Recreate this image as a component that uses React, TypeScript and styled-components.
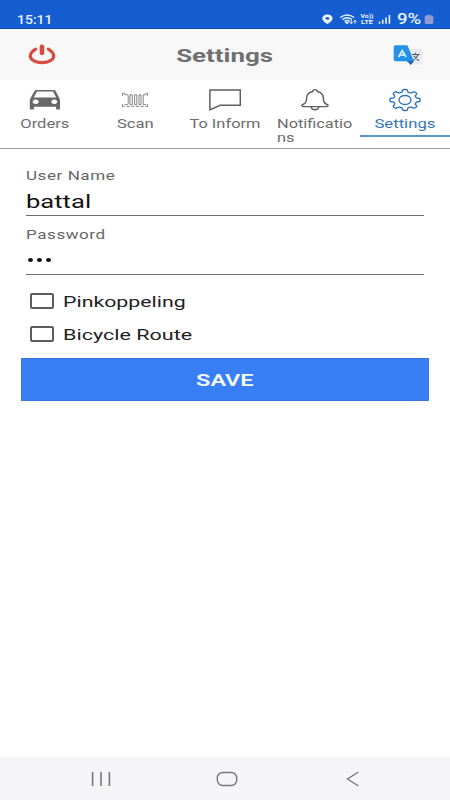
import React from 'react';
import styled, { createGlobalStyle } from 'styled-components';

const GlobalStyle = createGlobalStyle`
  * { box-sizing: border-box; }
  body { margin: 0; background: #fff; font-family: Roboto, "Liberation Sans", sans-serif; }
`;

const Screen = styled.div`
  width: 450px;
  height: 800px;
  display: flex;
  flex-direction: column;
  background: #fff;
  overflow: hidden;
`;

/* Wide lettering: glyphs are stretched horizontally from the given origin. */
const Wide = styled.span<{ $x: number; $origin?: string; $gap?: number }>`
  display: block;
  width: max-content;
  white-space: pre;
  letter-spacing: ${p => p.$gap ?? 0}px;
  transform: scaleX(${p => p.$x});
  transform-origin: ${p => p.$origin ?? 'left'} center;
`;

const StatusBar = styled.header`
  height: 29px;
  flex: none;
  display: flex;
  align-items: flex-start;
  justify-content: space-between;
  padding: 11px 16px 0 17px;
  background: #165dd2;
  border-bottom: 1px solid #1047ac;
  color: #e9f4ff;
  font-size: 12.5px;
  line-height: 17px;
  font-weight: 500;
`;

const StatusIcons = styled.div`
  display: flex;
  width: 112px;
`;

const Percent = styled.div`
  width: 26px;
  height: 17px;
  margin-left: -2px;
  margin-right: 1px;
  font-size: 14px;
`;

const TitleBar = styled.div`
  height: 51px;
  flex: none;
  display: grid;
  grid-template-columns: 84px 1fr 84px;
  align-items: center;
  justify-items: center;
  background: #f8f8f8;
`;

const Title = styled.h1`
  margin: 0;
  padding-top: 2px;
  color: #6f6f6f;
  font-size: 18.5px;
  line-height: 24px;
  font-weight: 700;
`;

const IconButton = styled.button`
  border: 0;
  padding: 0;
  background: none;
  display: block;
  line-height: 0;
`;

const Tabs = styled.nav`
  height: 69px;
  flex: none;
  display: grid;
  grid-template-columns: repeat(5, 90px);
  border-bottom: 1px solid #999;
`;

const Tab = styled.a<{ $active?: boolean }>`
  height: 57px;
  display: flex;
  flex-direction: column;
  align-items: center;
  padding-top: 7px;
  color: ${p => (p.$active ? '#3576bd' : '#6c6c6c')};
  border-bottom: ${p => (p.$active ? '2px solid #5c94cc' : '0')};
  font-size: 12px;
  line-height: 14px;

  svg { display: block; flex: none; }
`;

const TabLabel = styled.div<{ $multi?: boolean }>`
  margin-top: 4px;
  ${p => p.$multi && 'align-self: flex-start; margin-left: 6.5px;'}
`;

const Form = styled.main`
  flex: 1;
  padding: 18px 21px 0;
`;

const Field = styled.label<{ $height: number; $top?: number }>`
  display: block;
  height: ${p => p.$height}px;
  margin: ${p => p.$top ?? 0}px 5px 0;
  border-bottom: 1px solid #6c6c6c;
`;

const FieldLabel = styled.div`
  color: #666;
  font-size: 12.7px;
  line-height: 17px;
`;

const FieldValue = styled.div`
  margin-top: 7px;
  padding-top: 1px;
  color: #111;
  font-size: 18px;
  line-height: 20px;
`;

const Dots = styled.div`
  display: flex;
  gap: 4px;
  padding: 15px 0 0 2px;
`;

const Dot = styled.i`
  width: 5px;
  height: 4px;
  border-radius: 50%;
  background: #111;
`;

const Checks = styled.div`
  margin: 9px 0 0 9px;
`;

const CheckRow = styled.label`
  display: flex;
  align-items: center;
  gap: 9px;
  height: 33.5px;
  color: #222;
  font-size: 15.5px;
  line-height: 22px;
`;

const CheckText = styled.div`
  padding-top: 2px;
`;

const Box = styled.i`
  width: 24px;
  height: 16px;
  border: 2px solid #5d5d5d;
  border-radius: 2px;
`;

const SaveButton = styled.button`
  display: flex;
  align-items: center;
  justify-content: center;
  width: 408px;
  height: 43px;
  margin-top: 7px;
  padding: 0;
  border: 1px solid #3975d8;
  background: #387ef5;
  color: #f4faff;
  font: 600 17px/22px Roboto, sans-serif;
`;

const NavBar = styled.footer`
  height: 43px;
  flex: none;
  display: grid;
  grid-template-columns: 202px 50px 202px;
  align-items: center;
  justify-items: center;
  padding-top: 1px;
  background: #f5f5f7;
`;

const SystemIcons = () => (
  <svg width="77" height="17" viewBox="322 11 77 17" fill="none" stroke="#e9f4ff">
    <path d="M327.4 14.6c-3.3 0-5.1 1.7-5.1 4 0 2.1 2.2 3.7 5.1 5.5 2.9-1.8 5.1-3.4 5.1-5.5 0-2.3-1.8-4-5.1-4z" fill="#f4faff" stroke="none" />
    <ellipse cx="327.4" cy="18.4" rx="1.9" ry="1.3" fill="#165dd2" stroke="none" />
    <path d="M340.2 17.5q7-5 14 0M342.3 19.5q4.9-3.5 9.8 0M344.5 21.4q2.7-1.8 5.2 0" strokeWidth="1.3" />
    <path d="M347 23.7l-1.7-1.2h3.4zM351.3 20.2v3.3m-1.5-1.2l1.5 1.2 1.5-1.2M355 23.7v-3.4m-1.5 1.2l1.5-1.2 1.5 1.2" strokeWidth="1" />
    <g fill="#e9f4ff" stroke="none" fontFamily="Roboto" fontWeight="700">
      <text x="360.5" y="18" fontSize="5" textLength="13" lengthAdjust="spacingAndGlyphs">Vo))</text>
      <text x="361" y="24.2" fontSize="5" textLength="12" lengthAdjust="spacingAndGlyphs">LTE</text>
    </g>
    <path d="M379.5 21.8v1.9M382.7 19.7v4M386 17.4v6.3M389.4 15v8.7" strokeWidth="1.6" />
  </svg>
);

const Battery = () => (
  <svg width="10" height="17" viewBox="0 0 10 17">
    <path d="M2.2 4.6h1.2V3.7h3v.9h1.4c1 0 1.5.5 1.5 1.4v5.6c0 .9-.5 1.4-1.5 1.4H2.2c-1 0-1.5-.5-1.5-1.4V6c0-.9.5-1.4 1.5-1.4z" fill="#8f9bd5" />
  </svg>
);

const PowerIcon = () => (
  <svg width="28" height="22" viewBox="0 0 28 22" fill="none" stroke="#d74c40" strokeLinecap="round">
    <path d="M7.7 5.2C1.3 9 1 13.2 4.6 16C9.5 19.5 18.5 19.5 23.4 16C27 13.2 26.7 9 20.3 5.2" strokeWidth="3.1" />
    <path d="M14 2.8v6.2" strokeWidth="4.6" />
  </svg>
);

const TranslateIcon = () => (
  <svg width="30" height="22" viewBox="393 43 30 22">
    <path d="M407 48h14q1.5 0 1.5 1.3v13q0 1.3-1.5 1.3h-10z" fill="#e7ebef" />
    <path d="M395.7 44.2h10.7q1 0 1.4.9l6 14.8-3.1 3.8-4.1-3.5h-10.9q-2 0-2-1.6V45.8q0-1.6 2-1.6z" fill="#2490e6" />
    <path d="M408.2 60.2h5.7l-3.2 3.7z" fill="#285f9c" />
    <path d="M398.6 56l3.6-6.3 3.8 6.3M400 54h4.5" fill="none" stroke="#e6f5ff" strokeWidth="1.6" />
    <path d="M412 53.5h7.5M415.5 51.8v1.7M418.3 53.5q-1.8 4.2-5 5.7M413.7 54.7q2 3 5.3 4.7" fill="none" stroke="#4b5963" strokeWidth="1.1" />
  </svg>
);

const CarIcon = () => (
  <svg width="34" height="26" viewBox="0 0 34 26">
    <path fillRule="evenodd" fill="#696969" d="M8.5 3h17.2q1.6 0 2.2 1.4l3.6 7.2q.5 1 .5 2v8.1q0 .9-1.1.9h-1.6q-1.2 0-1.2-.9v-1.9H5.9v1.9q0 .9-1.2.9H3q-1.2 0-1.2-.9v-8.1q0-1 .5-2l3.9-7.2Q6.8 3 8.5 3zM9 4.6L5.8 10.4h22.4L25 4.6zM7.7 12.5a3 2.3 0 1 0 .01 0zM26.3 12.5a3 2.3 0 1 0 .01 0z" />
  </svg>
);

const ScanIcon = () => (
  <svg width="30" height="26" viewBox="0 0 30 26" fill="none" stroke="#777" strokeWidth=".9">
    <path d="M4.6 6.3H2.4v2.6M25.4 6.3h2.2v2.6M4.6 19.5H2.4v-2.6M25.4 19.5h2.2v-2.6M4.2 7.6h2.2q1.8 0 1.8 1.4v7.6q0 1.1-1.4 1.1H4.4M10 7.8h2.3v9.9H10zM14.6 7.8h2.2v9.9h-2.2zM19 7.8h2v9.9h-2zM23.2 17.7V7.8h3M23.2 17.7h3" />
    <path d="M6.8 19.4h17" strokeDasharray="3 1.6" />
  </svg>
);

const ChatIcon = () => (
  <svg width="34" height="26" viewBox="0 0 34 26" fill="none" stroke="#5e5e5e" strokeWidth="1.5">
    <path d="M1.9 2.9h30.4v15.3H12.1L1.9 22.9z" />
  </svg>
);

const BellIcon = () => (
  <svg width="30" height="26" viewBox="0 0 30 26" fill="none" stroke="#5e5e5e" strokeWidth="1.45">
    <path d="M12.7 4.5q0-1.9 2.3-1.9t2.3 1.9q5.8 1.4 6 6.1c.1 4.1.6 5.7 3.3 6.7 2.3.8 1.8 2.3-.5 2.3H3.9c-2.3 0-2.8-1.5-.5-2.3 2.7-1 3.2-2.6 3.3-6.7q.2-4.7 6-6.1zM11.2 19.8c.2 3.9 7.4 3.9 7.6 0" />
  </svg>
);

/* Eight-toothed outline: the radius alternates between tooth tip and valley. */
const gearPath = (() => {
  const points: string[] = [];
  for (let i = 0; i <= 128; i++) {
    const a = (i / 128) * Math.PI * 2;
    const radius = 0.89 + Math.tanh(2.6 * Math.cos(8 * a)) * 0.12;
    points.push(`${(17 + Math.cos(a) * 15 * radius).toFixed(2)} ${(13 + Math.sin(a) * 10.4 * radius).toFixed(2)}`);
  }
  return `M${points.join('L')}Z`;
})();

const GearIcon = () => (
  <svg width="34" height="26" viewBox="0 0 34 26" fill="none" stroke="#2c70bd" strokeWidth="1.35">
    <path d={gearPath} strokeLinejoin="round" />
    <ellipse cx="17" cy="13" rx="6" ry="4.5" />
  </svg>
);

export default function App() {
  return (
    <>
      <GlobalStyle />
      <Screen>
        <StatusBar>
          <Wide $x={1.12}>15:11</Wide>
          <StatusIcons>
            <SystemIcons />
            <Percent><Wide $x={1.33}>9%</Wide></Percent>
            <Battery />
          </StatusIcons>
        </StatusBar>
        <TitleBar>
          <IconButton aria-label="Power"><PowerIcon /></IconButton>
          <Title><Wide $x={1.4} $origin="center">Settings</Wide></Title>
          <IconButton aria-label="Language"><TranslateIcon /></IconButton>
        </TitleBar>
        <Tabs>
          <Tab><CarIcon /><TabLabel><Wide $x={1.38} $origin="center">Orders</Wide></TabLabel></Tab>
          <Tab><ScanIcon /><TabLabel><Wide $x={1.38} $origin="center">Scan</Wide></TabLabel></Tab>
          <Tab><ChatIcon /><TabLabel><Wide $x={1.37} $origin="center">To Inform</Wide></TabLabel></Tab>
          <Tab>
            <BellIcon />
            <TabLabel $multi><Wide $x={1.36}>{'Notificatio\nns'}</Wide></TabLabel>
          </Tab>
          <Tab $active><GearIcon /><TabLabel><Wide $x={1.39} $origin="center">Settings</Wide></TabLabel></Tab>
        </Tabs>
        <Form>
          <Field $height={49}>
            <FieldLabel><Wide $x={1.345} $gap={0.4}>User Name</Wide></FieldLabel>
            <FieldValue><Wide $x={1.42}>battal</Wide></FieldValue>
          </Field>
          <Field $height={49} $top={10}>
            <FieldLabel><Wide $x={1.345} $gap={0.4}>Password</Wide></FieldLabel>
            <Dots><Dot /><Dot /><Dot /></Dots>
          </Field>
          <Checks>
            <CheckRow><Box /><CheckText><Wide $x={1.375}>Pinkoppeling</Wide></CheckText></CheckRow>
            <CheckRow><Box /><CheckText><Wide $x={1.39}>Bicycle Route</Wide></CheckText></CheckRow>
          </Checks>
          <SaveButton><Wide $x={1.38} $origin="center">SAVE</Wide></SaveButton>
        </Form>
        <NavBar>
          <svg width="20" height="16" viewBox="0 0 20 16" stroke="#777" strokeWidth="1.6"><path d="M1.6 1v14M10 1v14M18.4 1v14" /></svg>
          <svg width="22" height="16" viewBox="0 0 22 16" fill="none" stroke="#777" strokeWidth="1.4"><rect x="1.3" y="1.5" width="19.4" height="13" rx="5.5" /></svg>
          <svg width="14" height="16" viewBox="0 0 14 16" fill="none" stroke="#777" strokeWidth="1.3"><path d="M12.5 1L1.5 8l11 7" /></svg>
        </NavBar>
      </Screen>
    </>
  );
}
